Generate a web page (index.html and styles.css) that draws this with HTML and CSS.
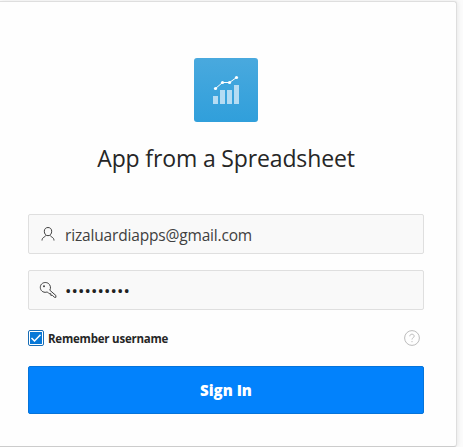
FILE: index.html
```
<!DOCTYPE html>
<html lang="en">
<head>
<meta charset="utf-8">
<title>App from a Spreadsheet</title>
<link rel="stylesheet" href="styles.css">
</head>
<body>
<main class="card">
  <div class="logo">
    <svg width="64" height="64" viewBox="0 0 64 64">
      <g fill="#b5dcf3"><path d="M19 38h5v8h-5zM26 32h5v14h-5zM33 32h5v14h-5zM40 27h5v19h-5z"/></g>
      <path d="M21.500 30.500L28.500 24.500H35.500L42.500 19.500" fill="none" stroke="#fff" stroke-width="1"/>
      <g fill="#fff"><circle cx="21.500" cy="30.500" r="1.600"/><circle cx="28.500" cy="24.500" r="1.600"/><circle cx="35.500" cy="24.500" r="1.600"/><circle cx="42.500" cy="19.500" r="1.600"/></g>
    </svg>
  </div>
  <h1 class="title"><span>App from a Spreadsheet</span></h1>
  <form class="form">
    <div class="field">
      <svg class="icon" width="18" height="18" viewBox="0 0 18 18">
        <path d="M9 2.500C6.700 2.500 5.300 4.100 5.300 6.200C5.300 8.700 6.700 10.700 9 10.700S12.700 8.700 12.700 6.200C12.700 4.100 11.300 2.500 9 2.500ZM6.900 10.200C6.900 12 3.100 11.700 3 15.500M11.100 10.200C11.100 12 14.900 11.700 15 15.500"/>
      </svg>
      <span class="value">rizaluardiapps@gmail.com</span>
    </div>
    <div class="field">
      <svg class="icon" width="18" height="18" viewBox="0 0 18 18">
        <path d="M10.800 9.200C12.200 6.900 11.400 3.700 9.200 2.300C6.800 .8 3.400 1.500 2 3.800C.6 6.200 1.400 9.400 3.800 10.700C5.300 11.500 7 11.500 8.300 10.900L10.100 12.700H11.800V14.300H13.300L15.500 16.300H16.900V14.500Z"/><circle class="dot" cx="5" cy="5.300" r="1"/>
      </svg>
      <span class="value dots">••••••••••</span>
    </div>
    <div class="options">
      <svg class="check" width="16" height="16" viewBox="0 0 16 16">
        <rect x=".5" y=".5" width="15" height="15" rx="1.500" fill="#fff" stroke="#176cb5"/>
        <rect x="2" y="2" width="12" height="12" fill="#0878d7"/>
        <path d="M3.500 8L6.500 11L12.500 4.800" fill="none" stroke="#fff" stroke-width="1.500"/>
      </svg>
      <span class="remember">Remember username</span>
      <svg class="help" width="16" height="16" viewBox="0 0 16 16" fill="none" stroke="#bcbcbc">
        <circle cx="8" cy="8" r="7.400"/>
        <path d="M5.800 6.300C5.800 4.900 6.800 4.200 8 4.200S10.200 5 10.200 6.200C10.200 7.700 8 7.700 8 9.500M8 11V12.200"/>
      </svg>
    </div>
    <button class="submit" type="button"><span>Sign In</span></button>
  </form>
</main>
</body>
</html>
```
FILE: styles.css
```
* { box-sizing: border-box; }
body {
  margin: 0;
  height: 447px;
  overflow: hidden;
  background: #fbfbfb;
  color: #262626;
  font-family: "Open Sans", "Noto Sans", sans-serif;
}
.card {
  width: 457px;
  height: 446px;
  margin-top: 1px;
  padding: 56px 32px 0 28px;
  background: #fefefe;
  border: 1px solid #dedede;
  border-left: 0;
  border-bottom-color: #ccc;
  border-radius: 0 3px 3px 0;
  box-shadow: 1px 0 4px rgba(0, 0, 0, .08);
}
.logo {
  width: 64px;
  height: 64px;
  margin: 0 auto;
  border-radius: 3px;
  background: linear-gradient(#49a9de, #309fdb);
}
.logo svg { display: block; }
.title {
  margin: 20px 0 40px;
  height: 32px;
  font-size: 23px;
  line-height: 32px;
  font-weight: 400;
  letter-spacing: -.14px;
  text-align: center;
  white-space: nowrap;
}
.field {
  display: flex;
  align-items: center;
  height: 40px;
  margin-bottom: 16px;
  padding-left: 10px;
  border: 1px solid #dfdfdf;
  border-radius: 2px;
  background: #f9f9f9;
}
.icon {
  fill: none;
  stroke: #404040;
  stroke-width: 1;
}
.dot { fill: #404040; stroke: none; }
.value {
  margin-left: 8px;
  padding-top: 2px;
  font-size: 15.5px;
  line-height: 24px;
  letter-spacing: -.17px;
  color: #404040;
}
.dots {
  font-size: 17px;
  letter-spacing: .12px;
  color: #202020;
}
.options {
  display: flex;
  align-items: center;
  height: 24px;
  margin-bottom: 16px;
}
.remember {
  margin-left: 4px;
  padding-top: 1px;
  font-size: 11.5px;
  line-height: 16px;
  font-weight: 700;
  letter-spacing: -.22px;
}
.help { margin: 0 4px 0 auto; }
.submit {
  display: block;
  width: 100%;
  height: 48px;
  padding: 0;
  border: 1px solid #0574da;
  border-radius: 2px;
  background: #0282fc;
  color: #fff;
  font: 800 15px/24px "Open Sans", sans-serif;
}
```
